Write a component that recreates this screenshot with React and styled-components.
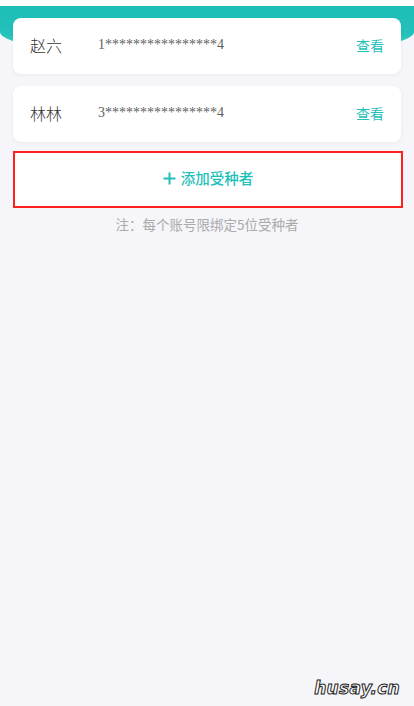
import React from "react";
import styled, { createGlobalStyle } from "styled-components";

const GlobalStyle = createGlobalStyle`
  html, body {
    margin: 0;
    padding: 0;
    background: #f5f5fa;
  }
  body {
    font-family: "Noto Sans CJK SC", "Noto Sans", sans-serif;
  }
`;

const people = [
  { name: "赵六", id: "1****************4" },
  { name: "林林", id: "3****************4" }
];

const App = () => {
  return (
    <Page>
      <GlobalStyle />
      <TopStrip />
      <Header />
      <List>
        {people.map(p => (
          <Card key={p.name}>
            <Name>{p.name}</Name>
            <IdNumber>{p.id}</IdNumber>
            <ViewLink>查看</ViewLink>
          </Card>
        ))}
        <AddButton>
          <svg width="13" height="13" viewBox="0 0 13 13">
            <path d="M6.5 0.5v12M0.5 6.5h12" stroke="#1fbfba" strokeWidth="2" />
          </svg>
          添加受种者
        </AddButton>
        <Note>注：每个账号限绑定5位受种者</Note>
      </List>
      <Watermark>husay.cn</Watermark>
    </Page>
  );
};

const Page = styled.div`
  position: relative;
  width: 414px;
  min-height: 706px;
  background: #f5f5fa;
  overflow: hidden;
`;

const TopStrip = styled.div`
  height: 6px;
  background: #ffffff;
`;

const Header = styled.div`
  height: 52px;
  background: linear-gradient(180deg, #1dbdb8 0%, #25c1bc 55%, #7ad8d4 100%);
  border-radius: 0 0 50% 50% / 0 0 26px 26px;
`;

const List = styled.div`
  display: flex;
  flex-direction: column;
  gap: 12px;
  margin-top: -40px;
  padding: 0 13px;
`;

const Card = styled.div`
  display: flex;
  align-items: center;
  height: 56px;
  padding: 0 17px;
  background: #ffffff;
  border-radius: 8px;
  box-shadow: 0 1px 4px rgba(0, 0, 0, 0.05);
  width: 354px;
  line-height: 1;
`;

const Name = styled.span`
  width: 68px;
  font-size: 16px;
  font-weight: 300;
  color: #333333;
  margin-top: -2px;
`;

const IdNumber = styled.span`
  flex: 1;
  font-family: "Liberation Serif", serif;
  font-size: 14px;
  color: #5e5e5e;
  margin-top: -2px;
`;

const ViewLink = styled.span`
  font-size: 14px;
  color: #1fbfba;
  margin-top: -2px;
`;

const AddButton = styled.div`
  display: flex;
  align-items: center;
  justify-content: center;
  gap: 5px;
  margin-top: -3px;
  height: 53px;
  width: 386px;
  background: #ffffff;
  border: 2px solid #ff2020;
  font-size: 14.5px;
  font-weight: 500;
  color: #1fbfba;
  line-height: 1;
  padding-bottom: 2px;
  box-sizing: content-box;
  height: 51px;
`;

const Note = styled.div`
  margin-top: -6px;
  text-align: center;
  font-size: 13.5px;
  color: #ababab;
`;

const Watermark = styled.div`
  position: absolute;
  right: 14px;
  bottom: 8px;
  font-family: "DejaVu Sans", sans-serif;
  font-weight: bold;
  font-style: italic;
  font-size: 17px;
  color: #ffffff;
  -webkit-text-stroke: 1px #222;
  letter-spacing: 0.3px;
`;

export default App;
